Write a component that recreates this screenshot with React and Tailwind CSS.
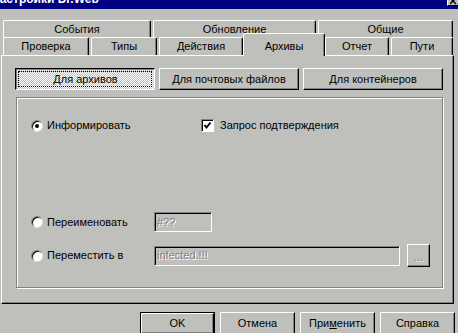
import React from "react";

// Win95 bevels
const raised = "border border-t-white border-l-white border-r-black border-b-black shadow-[inset_-1px_-1px_#808080]";
const sunken = "border border-t-[#808080] border-l-[#808080] border-r-white border-b-white shadow-[inset_1px_1px_#000]";
const grayText = "text-[#808080] [text-shadow:1px_1px_0_#fff]";

function Tab({ label, w }) {
  return (
    <div className={`${w} h-full rounded-t-[2px] border-t border-l border-r border-t-white border-l-white border-r-black shadow-[inset_-1px_0_#808080] flex items-center justify-center`}>
      {label}
    </div>
  );
}

function Radio({ checked }) {
  return (
    <span className="w-[12px] h-[12px] shrink-0 rounded-full bg-white border border-t-[#808080] border-l-[#808080] border-r-[#dfdfdf] border-b-[#dfdfdf] shadow-[inset_1px_1px_#000] flex items-center justify-center">
      {checked && <span className="w-[4px] h-[4px] rounded-full bg-black" />}
    </span>
  );
}

function Checkbox() {
  return (
    <span className={`w-[13px] h-[13px] shrink-0 bg-white ${sunken} flex items-center justify-center`}>
      <svg width="9" height="9" viewBox="0 0 9 9">
        <polyline points="1.5,4 3.5,6.5 7.5,1.5" fill="none" stroke="#000" strokeWidth="2" />
      </svg>
    </span>
  );
}

function Button({ children, def }) {
  const inner = (
    <div className={`w-full h-full ${raised} flex items-center justify-center`}>{children}</div>
  );
  return (
    <div className="w-[75px] h-[23px]">
      {def ? <div className="w-full h-full border border-black">{inner}</div> : inner}
    </div>
  );
}

export default function App() {
  return (
    <div className="w-[458px] h-[333px] overflow-hidden bg-[#bfc0bb] text-black text-[11px] font-['Liberation_Sans',Arial,sans-serif]">
      {/* заголовок окна, верх обрезан */}
      <div className="h-[9px] bg-[#000080] flex justify-between overflow-hidden">
        <span className="text-white font-bold text-[12px] leading-[12px] -mt-[7px] -ml-[9px] whitespace-nowrap">
          Настройки Dr.Web
        </span>
        <span className="w-[11px] h-[6px] bg-[#bfc0bb] border-l border-l-white border-b border-b-black flex items-end justify-center overflow-hidden">
          <svg width="7" height="5" viewBox="0 0 7 5">
            <path d="M0 -2 L6 4 M6 -2 L0 4" stroke="#000" strokeWidth="1.4" />
          </svg>
        </span>
      </div>

      {/* вкладки */}
      <div className="mt-[11px] h-[17px] pl-[3px] flex gap-[2px]">
        <Tab label="События" w="w-[148px]" />
        <Tab label="Обновление" w="w-[163px]" />
        <Tab label="Общие" w="w-[135px]" />
      </div>
      <div className="h-[18px] pl-[3px] flex gap-[2px]">
        <Tab label="Проверка" w="w-[86px]" />
        <Tab label="Типы" w="w-[66px]" />
        <Tab label="Действия" w="w-[84px]" />
        <div className="relative z-10 w-[82px] h-[23px] -mt-[4px] -mx-[2px] shrink-0 bg-[#bfc0bb] rounded-t-[2px] border-t border-l border-r border-t-white border-l-white border-r-black shadow-[inset_-1px_0_#808080] flex items-start justify-center pt-[4px]">
          Архивы
        </div>
        <Tab label="Отчет" w="w-[64px]" />
        <Tab label="Пути" w="w-[62px]" />
      </div>

      {/* панель вкладки */}
      <div className="ml-[1px] w-[453px] h-[249px] border border-t-white border-l-white border-r-black border-b-black shadow-[inset_-1px_-1px_#808080] flex flex-col">
        <div className="mt-[12px] ml-[13px] flex gap-[4px]">
          <div className="w-[140px] h-[22px] border border-t-black border-l-black border-r-white border-b-white shadow-[inset_1px_1px_#808080] bg-[repeating-conic-gradient(#ffffff_0_25%,#bfc0bb_0_50%)] bg-[length:2px_2px] p-[2px]">
            <div className="w-full h-full border border-dotted border-black flex items-center justify-center pt-[1px] pl-[1px]">
              <span className="bg-transparent">Для архивов</span>
            </div>
          </div>
          <div className={`w-[140px] h-[22px] ${raised} flex items-center justify-center`}>Для почтовых файлов</div>
          <div className={`w-[140px] h-[22px] ${raised} flex items-center justify-center`}>Для контейнеров</div>
        </div>

        <div className="mt-[7px] ml-[14px] w-[427px] h-[191px] border border-[#808080] shadow-[inset_1px_1px_#fff,1px_1px_#fff] flex flex-col pl-[14px]">
          <div className="mt-[21px] h-[13px] flex items-center">
            <label className="w-[170px] flex items-center gap-[4px]">
              <Radio checked />
              <span>Информировать</span>
            </label>
            <label className="flex items-center gap-[6px]">
              <Checkbox />
              <span>Запрос подтверждения</span>
            </label>
          </div>

          <div className="mt-[80px] h-[20px] flex items-center">
            <label className="w-[123px] flex items-center gap-[4px]">
              <Radio />
              <span>Переименовать</span>
            </label>
            <div className={`w-[58px] h-[20px] ${sunken} pl-[2px] flex items-center ${grayText}`}>#??</div>
          </div>

          <div className="mt-[12px] h-[23px] flex items-center">
            <label className="w-[123px] flex items-center gap-[4px]">
              <Radio />
              <span>Переместить в</span>
            </label>
            <div className={`w-[246px] h-[20px] ${sunken} pl-[2px] flex items-center ${grayText}`}>infected.!!!</div>
            <div className={`ml-[7px] w-[23px] h-[23px] ${raised} flex items-end justify-center pb-[3px] leading-none ${grayText}`}>...</div>
          </div>
        </div>
      </div>

      {/* кнопки диалога */}
      <div className="mt-[8px] pl-[140px] flex gap-[5px]">
        <Button def>OK</Button>
        <Button>Отмена</Button>
        <Button>
          <span>При<span className="underline">м</span>енить</span>
        </Button>
        <Button>Справка</Button>
      </div>
    </div>
  );
}
